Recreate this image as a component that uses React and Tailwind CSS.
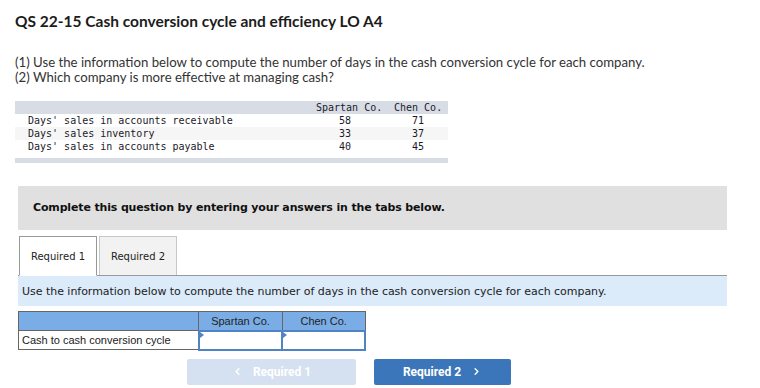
import { ChevronLeft, ChevronRight } from "lucide-react"

const rows = [
  { label: "Days' sales in accounts receivable", spartan: "58", chen: "71" },
  { label: "Days' sales inventory", spartan: "33", chen: "37" },
  { label: "Days' sales in accounts payable", spartan: "40", chen: "45" },
]

function Cell() {
  return (
    <td className="relative h-[19px] border-2 border-[#4f83c4] bg-white p-0">
      <span className="absolute left-0 top-0 h-0 w-0 border-y-[3px] border-l-[4px] border-y-transparent border-l-[#4f83c4]" />
    </td>
  )
}

export default function App() {
  return (
    <div className="min-h-[388px] bg-white pb-2 text-[#222]">
      <h1 className="ml-[15px] pt-[11px] font-['Lato',sans-serif] text-[15.5px] font-bold leading-[20px] text-[#1c1c1c]">
        QS 22-15 Cash conversion cycle and efficiency LO A4
      </h1>

      <div className="ml-[15px] mt-[24px] font-['Lato',sans-serif] text-[13.2px] leading-[15px] text-[#333]">
        <p>(1) Use the information below to compute the number of days in the cash conversion cycle for each company.</p>
        <p>(2) Which company is more effective at managing cash?</p>
      </div>

      <div className="ml-[15px] mt-[16px] w-[433px] font-['DejaVu_Sans_Mono',monospace] text-[10px] leading-[13px] text-[#1a1a2a]">
        <div className="flex h-[13px] bg-[#d8dce5]">
          <div className="w-[301px]" />
          <div className="w-[78px]">Spartan Co.</div>
          <div>Chen Co.</div>
        </div>
        {rows.map((r, i) => (
          <div key={r.label} className={"flex h-[13px] " + (i === 1 ? "bg-[#f6f6f6]" : "bg-white")}>
            <div className="w-[324px] pl-[13px]">{r.label}</div>
            <div className="w-[73px]">{r.spartan}</div>
            <div>{r.chen}</div>
          </div>
        ))}
        <div className="mt-[5px] h-[5px] bg-[#d8dce5]" />
      </div>

      <div className="ml-[18px] mt-[23px] flex h-[44px] w-[709px] items-center bg-[#e0e0e0] pl-[15px] font-['DejaVu_Sans',sans-serif] text-[11px] font-bold tracking-[-0.15px] text-[#111]">
        Complete this question by entering your answers in the tabs below.
      </div>

      <div className="ml-[18px] mt-[6px] flex h-[40px] w-[709px] border-b border-[#999] font-['DejaVu_Sans',sans-serif] text-[10px] text-[#222]">
        <div className="-mb-px ml-px flex w-[78px] items-center justify-center border border-b-white border-[#999] bg-white">
          Required 1
        </div>
        <div className="ml-[2px] flex w-[78px] items-center justify-center border border-b-0 border-[#c8c8c8] bg-[#f2f2f2]">
          Required 2
        </div>
      </div>

      <div className="ml-[18px] flex h-[30px] w-[709px] items-center bg-[#dbebf9] pl-[4px] pt-[3px] font-['DejaVu_Sans',sans-serif] text-[11px] tracking-[-0.03px] text-[#222]">
        Use the information below to compute the number of days in the cash conversion cycle for each company.
      </div>

      <table className="ml-[18px] mt-[5px] w-[348px] border-collapse font-['Liberation_Sans',Arial,sans-serif] text-[11px] text-[#222]">
        <thead>
          <tr className="h-[19px] bg-[#7aade6]">
            <th className="w-[181px] border border-[#666] p-0" />
            <th className="w-[84px] border border-[#666] p-0 text-center font-normal">Spartan Co.</th>
            <th className="w-[83px] border border-[#666] p-0 text-center font-normal">Chen Co.</th>
          </tr>
        </thead>
        <tbody>
          <tr className="h-[19px]">
            <td className="border border-[#666] p-0 pl-[3px]">Cash to cash conversion cycle</td>
            <Cell />
            <Cell />
          </tr>
        </tbody>
      </table>

      <div className="ml-[187px] mt-[8px] flex gap-[18px] font-['Roboto',sans-serif] text-[12px] font-bold text-white">
        <div className="flex h-[26px] w-[169px] items-center justify-center gap-[10px] rounded-[2px] bg-[#d5e1f0]">
          <ChevronLeft size={11} strokeWidth={3} />
          <span>Required 1</span>
        </div>
        <div className="flex h-[26px] w-[137px] items-center justify-center gap-[10px] rounded-[2px] bg-[#3a76b9]">
          <span>Required 2</span>
          <ChevronRight size={11} strokeWidth={3} />
        </div>
      </div>
    </div>
  )
}
